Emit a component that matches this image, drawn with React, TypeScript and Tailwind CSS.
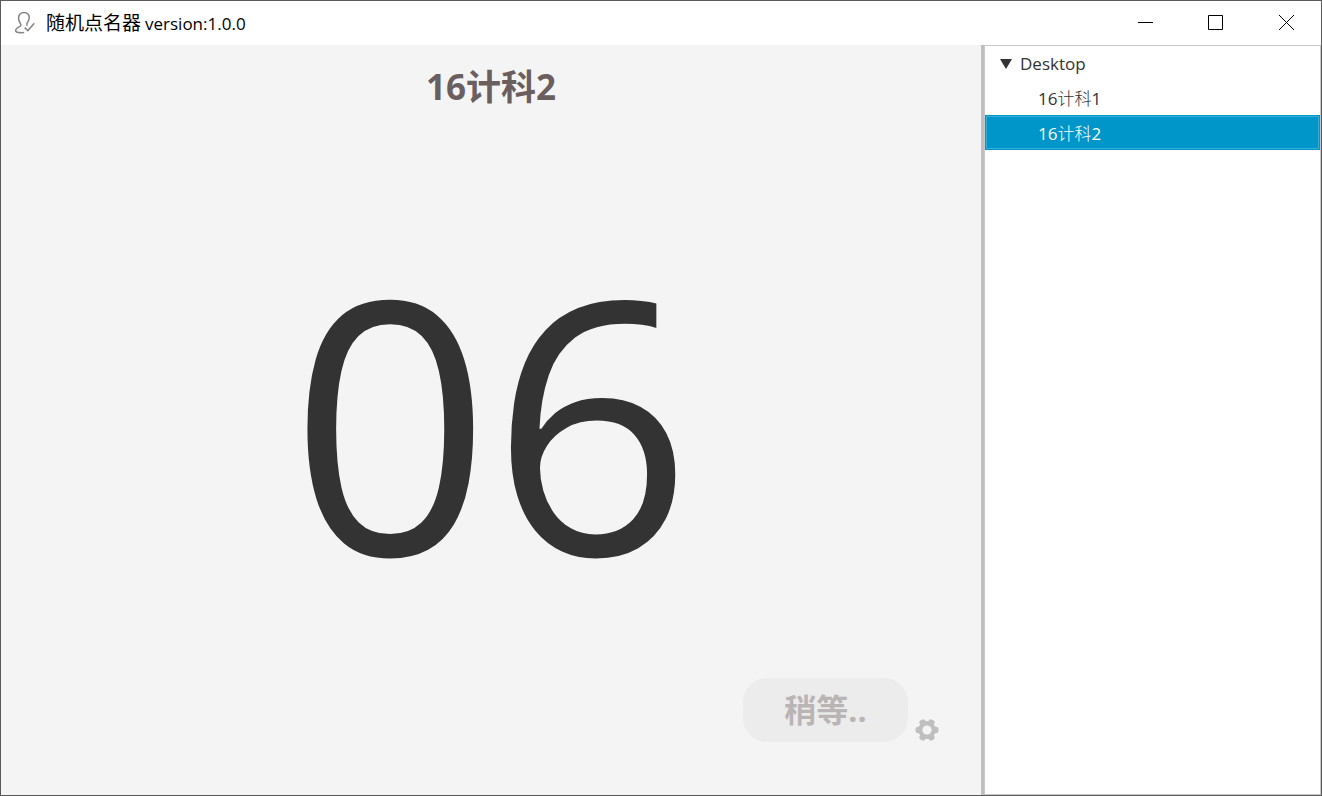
import { useState } from "react";

const classes = ["16计科1", "16计科2"];

function AppLogo() {
  return (
    <svg viewBox="0 0 24 24" className="h-6 w-6" fill="none" stroke="#858585" strokeWidth="1.5" aria-hidden="true">
      <path d="M11.2 21.6C8 21.8 2.4 22 2.6 19.2C2.8 16.2 8 16.2 8 14C8 12.4 5.6 11.2 5.6 7.2C5.6 3.6 7.8 1.5 11 1.5C14.4 1.5 16.4 3.6 16.2 7C16 9.8 14.4 11 13.9 12.8C13.7 13.8 13.9 14.4 14.4 14.8" />
      <path d="M11.6 16.6L14.9 19.6L21.3 12.2" />
    </svg>
  );
}

function Gear() {
  return (
    <svg viewBox="-12 -12 24 24" className="h-6 w-6" aria-hidden="true">
      <g fill="#bfbfbf">
        <circle r="8.9" />
        <rect x="-11.5" y="-3.2" width="23" height="6.4" rx="2.6" />
        <rect x="-11.5" y="-3.2" width="23" height="6.4" rx="2.6" transform="rotate(60)" />
        <rect x="-11.5" y="-3.2" width="23" height="6.4" rx="2.6" transform="rotate(120)" />
      </g>
      <circle r="4.6" fill="#f4f4f4" />
    </svg>
  );
}

export default function App() {
  const [selected, setSelected] = useState("16计科2");
  const [open, setOpen] = useState(true);

  return (
    <div className="flex min-h-screen flex-col border border-[#5a5a5a] bg-[#f4f4f4] font-['Open_Sans','Noto_Sans_CJK_SC',sans-serif] text-[#333333]">
      <header className="flex h-11 items-center bg-white pl-3 text-black">
        <AppLogo />
        <h1 className="ml-[9px] flex items-baseline gap-1 text-[19px] leading-6">
          随机点名器 <span className="text-[17px]">version:1.0.0</span>
        </h1>
        <div className="ml-auto flex h-full pb-0.5">
          <button type="button" aria-label="Minimize" className="flex w-[69px] items-center justify-center">
            <svg viewBox="0 0 15 15" className="h-[15px] w-[15px]" stroke="currentColor" fill="none">
              <path d="M0 7.5H15" />
            </svg>
          </button>
          <button type="button" aria-label="Maximize" className="flex w-[71px] items-center justify-center">
            <svg viewBox="0 0 15 15" className="h-[15px] w-[15px]" stroke="currentColor" fill="none">
              <path d="M.5 .5H14.5V14.5H.5Z" />
            </svg>
          </button>
          <button type="button" aria-label="Close" className="flex w-[70px] items-center justify-center">
            <svg viewBox="0 0 15 15" className="h-[15px] w-[15px]" stroke="currentColor" fill="none">
              <path d="M0 0L15 15M15 0L0 15" />
            </svg>
          </button>
        </div>
      </header>

      <div className="flex flex-1">
        <main className="flex flex-1 flex-col">
          <h2 className="pt-4 text-center text-[35px] leading-[52px] font-bold text-[#6b5e5e]">{selected}</h2>
          <output className="flex flex-1 items-center justify-center pt-[46px] text-[352px] leading-none">06</output>
          <div className="flex items-end justify-end gap-[7px] pr-[42px] pb-[53px]">
            <button
              type="button"
              disabled
              className="h-16 w-[165px] rounded-3xl bg-[#ececec] text-[32px] leading-none font-bold text-[#bab5b5]"
            >
              稍等..
            </button>
            <button type="button" aria-label="Settings">
              <Gear />
            </button>
          </div>
        </main>

        <nav
          aria-label="Classes"
          className="w-[340px] border-l-[3px] border-[#c0c0c0] bg-white pr-px pl-px text-[17px] shadow-[inset_0_0_0_1px_#c8c8c8]"
        >
          <button
            type="button"
            aria-expanded={open}
            onClick={() => setOpen(!open)}
            className="flex h-[35px] w-full items-center gap-2 pt-0.5 pl-[15px] text-left"
          >
            <svg viewBox="0 0 12 10" className="h-2.5 w-3" fill="#333333" aria-hidden="true">
              <path d="M0 0H12L6 10Z" />
            </svg>
            Desktop
          </button>
          {open && (
            <ul className="font-['Open_Sans','Noto_Sans_CJK_SC_Light','Noto_Sans_CJK_SC',sans-serif]">
              {classes.map((name) => (
                <li key={name}>
                  <button
                    type="button"
                    onClick={() => setSelected(name)}
                    className={
                      name === selected
                        ? "flex h-[35px] w-full items-center border border-[#0096c9] bg-[#0096c9] pt-0.5 pl-[52px] text-white shadow-[inset_0_0_0_1px_#33aed8]"
                        : "flex h-[35px] w-full items-center border border-transparent pt-0.5 pl-[52px]"
                    }
                  >
                    {name}
                  </button>
                </li>
              ))}
            </ul>
          )}
        </nav>
      </div>
    </div>
  );
}
